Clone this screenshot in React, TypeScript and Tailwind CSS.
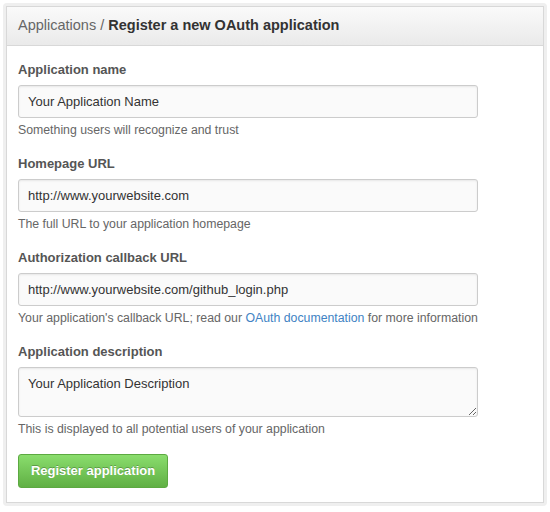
import React from 'react';

const font = { fontFamily: '"Liberation Sans", Arial, Helvetica, sans-serif' };

function Field({
  label,
  value,
  help,
  textarea = false,
}: {
  label: string;
  value: string;
  help: React.ReactNode;
  textarea?: boolean;
}) {
  const box =
    'w-[460px] rounded-[3px] border border-[#cccccc] bg-[#fafafa] px-[9px] text-[13px] text-[#333] shadow-[inset_0_1px_2px_rgba(0,0,0,0.075)] outline-none';
  return (
    <div className="flex flex-col">
      <label className="h-[18px] text-[13px] font-bold leading-[18px] text-[#555]">{label}</label>
      {textarea ? (
        <textarea
          readOnly
          value={value}
          className={`${box} mt-[6px] h-[50px] resize-y pt-[7px] leading-[18px]`}
          style={font}
        />
      ) : (
        <input
          readOnly
          value={value}
          className={`${box} mt-[6px] h-[33px]`}
          style={font}
        />
      )}
      <p className="mt-[4px] h-[16px] text-[12.3px] leading-[16px] text-[#666]">{help}</p>
    </div>
  );
}

export default function App() {
  return (
    <div className="h-[512px] w-[550px] bg-white p-[3px]" style={font}>
      <div className="rounded-[4px] bg-[#efefef] p-[3px]">
        <div className="h-[497px] border border-[#d8d8d8] bg-white">
          <div className="flex h-[39px] items-center border-b border-[#d8d8d8] bg-gradient-to-b from-[#fafafa] to-[#eaeaea] px-[11px] text-[14.5px] text-[#666]">
            <span>Applications /</span>
            <span className="ml-[4px] font-bold text-[#333]">Register a new OAuth application</span>
          </div>
          <div className="flex flex-col gap-[17px] px-[11px] pt-[15px]">
            <Field
              label="Application name"
              value="Your Application Name"
              help="Something users will recognize and trust"
            />
            <Field
              label="Homepage URL"
              value="http://www.yourwebsite.com"
              help="The full URL to your application homepage"
            />
            <Field
              label="Authorization callback URL"
              value="http://www.yourwebsite.com/github_login.php"
              help={
                <>
                  Your application's callback URL; read our{' '}
                  <a className="text-[#4183c4]">OAuth documentation</a> for more information
                </>
              }
            />
            <Field
              label="Application description"
              value="Your Application Description"
              help="This is displayed to all potential users of your application"
              textarea
            />
            <div>
              <button
                className="h-[34px] w-[150px] rounded-[3px] border border-[#5ca941] bg-gradient-to-b from-[#8add6d] to-[#60b044] text-[13px] font-bold text-white [text-shadow:0_-1px_0_rgba(0,0,0,0.25)]"
                style={font}
              >
                Register application
              </button>
            </div>
          </div>
        </div>
      </div>
    </div>
  );
}
